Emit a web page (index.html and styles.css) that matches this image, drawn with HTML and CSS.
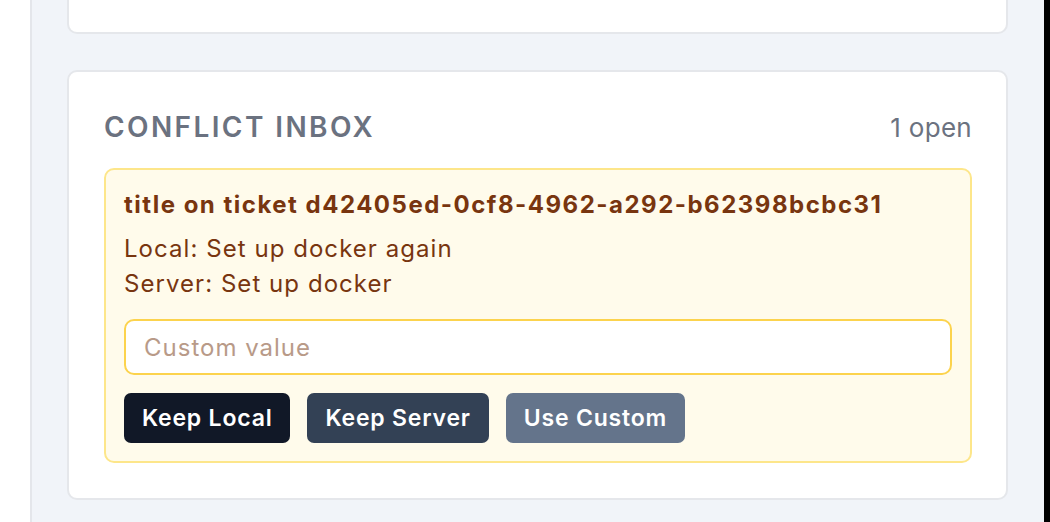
FILE: index.html
```html
<!DOCTYPE html>
<html lang="en">
<head>
<meta charset="utf-8">
<title>Conflict Inbox</title>
<link rel="stylesheet" href="styles.css">
</head>
<body>
  <div class="layout">
    <aside class="sidebar"></aside>
    <main class="main">
      <section class="card card-cut"></section>
      <section class="card inbox">
        <header class="inbox-head">
          <h2 class="inbox-title">CONFLICT INBOX</h2>
          <span class="inbox-count">1 open</span>
        </header>
        <div class="conflict">
          <div class="conflict-title">title on ticket d42405ed-0cf8-4962-a292-b62398bcbc31</div>
          <div class="conflict-values">
            <div>Local: Set up docker again</div>
            <div>Server: Set up docker</div>
          </div>
          <input class="custom-input" type="text" placeholder="Custom value">
          <div class="actions">
            <button class="btn btn-local">Keep Local</button>
            <button class="btn btn-server">Keep Server</button>
            <button class="btn btn-custom">Use Custom</button>
          </div>
        </div>
      </section>
    </main>
    <div class="edge"></div>
  </div>
</body>
</html>
```
FILE: styles.css
```css
* { box-sizing: border-box; }
html, body {
  margin: 0;
  padding: 0;
  height: 100%;
  overflow: hidden;
}
body {
  font-family: Inter, "Noto Sans", "DejaVu Sans", sans-serif;
  background: #ffffff;
}
.layout {
  display: flex;
  height: 522px;
}
.sidebar {
  width: 32px;
  flex: none;
  background: #ffffff;
  border-right: 2px solid #e4e6eb;
}
.main {
  flex: 1;
  background: #f1f4f9;
  padding: 0 36px 0 35px;
  display: flex;
  flex-direction: column;
}
.edge {
  width: 6px;
  flex: none;
  background: #000000;
}
.card {
  background: #ffffff;
  border: 2px solid #e5e7eb;
  border-radius: 10px;
}
.card-cut {
  height: 34px;
  border-top: none;
  border-top-left-radius: 0;
  border-top-right-radius: 0;
}
.inbox {
  margin-top: 36px;
  padding: 38px 34px 35px 35px;
}
.inbox-head {
  display: flex;
  justify-content: space-between;
  align-items: baseline;
  height: 34px;
  margin-bottom: 24px;
}
.inbox-title {
  margin: 0;
  font-size: 28px;
  line-height: 34px;
  font-weight: 600;
  letter-spacing: 2.4px;
  color: #6b7280;
}
.inbox-count {
  font-size: 26px;
  line-height: 34px;
  letter-spacing: 0.3px;
  color: #6b7280;
}
.conflict {
  background: #fffbeb;
  border: 2px solid #fde68a;
  border-radius: 10px;
  padding: 19px 18px 18px;
  color: #78350f;
}
.conflict-title {
  font-size: 24px;
  line-height: 32px;
  font-weight: 700;
  letter-spacing: 1.5px;
}
.conflict-values {
  margin-top: 10px;
  font-size: 24px;
  line-height: 35px;
  letter-spacing: 1.05px;
}
.custom-input {
  display: block;
  width: 100%;
  height: 56px;
  margin-top: 18px;
  padding: 0 18px;
  border: 2px solid #fcd34d;
  border-radius: 10px;
  background: #ffffff;
  font-family: inherit;
  font-size: 24px;
  letter-spacing: 1px;
  color: #78350f;
  outline: none;
}
.custom-input::placeholder {
  color: #b89a88;
}
.actions {
  display: flex;
  gap: 17px;
  margin-top: 18px;
}
.btn {
  height: 50px;
  padding: 0 18px;
  border: none;
  border-radius: 7px;
  font-family: inherit;
  font-size: 23px;
  font-weight: 600;
  letter-spacing: 0.8px;
  color: #ffffff;
}
.btn-local { background: #111827; }
.btn-server { background: #334155; }
.btn-custom { background: #64748b; }
```
